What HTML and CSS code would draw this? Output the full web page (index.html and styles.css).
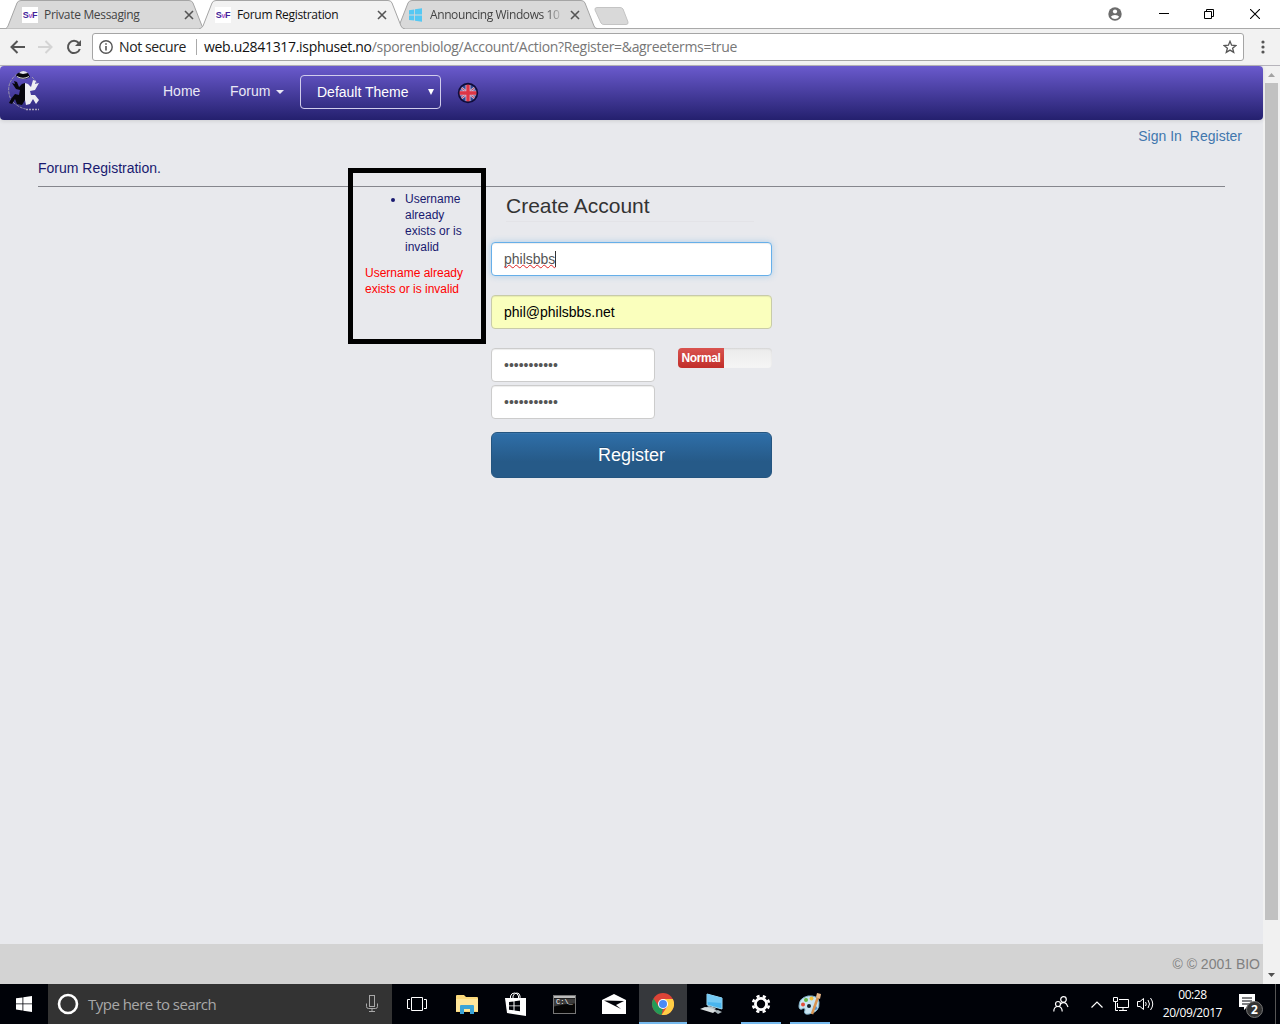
FILE: index.html
```html
<!DOCTYPE html>
<html lang="en">
<head>
<meta charset="utf-8">
<title>Forum Registration</title>
<link rel="stylesheet" href="styles.css">
</head>
<body>
<header class="tabstrip">
  <div class="tab">
    <svg class="tab-shape" width="200" height="29" viewBox="0 0 200 29"><path d="M0 28.5Q1 28 2 26L11 3Q12 .5 15 .5H183Q186 .5 187 3L196 26Q197 28.5 199 28.5" fill="#d9d9d9" stroke="#a5a5a5"/></svg>
    <span class="sf">S<i>v</i>F</span><span class="tab-title muted">Private Messaging</span>
    <svg class="close" width="10" height="10" viewBox="0 0 10 10"><path d="M1 1l8 8M9 1L1 9"/></svg>
  </div>
  <div class="tab behind">
    <svg class="tab-shape" width="205" height="29" viewBox="0 0 205 29"><path d="M5 28.5Q6 28 7 26L16 3Q17 .5 20 .5H189Q192 .5 193 3L202 26Q203 28.5 205 28.5" fill="#d9d9d9" stroke="#a5a5a5"/></svg>
    <svg class="favicon" width="15" height="14" viewBox="0 0 15 14"><path fill="#55c8f3" d="M1 2.2l5.2-.8v5.1H1zM7 1.3L14 .2v6.3H7zM1 7.4h5.2v5.2L1 11.9zM7 7.4h7v6.3l-7-1z"/></svg>
    <span class="tab-title muted fade">Announcing Windows 10</span>
    <svg class="close" width="10" height="10" viewBox="0 0 10 10"><path d="M1 1l8 8M9 1L1 9"/></svg>
  </div>
  <div class="tab active">
    <svg class="tab-shape" width="206" height="29" viewBox="0 0 206 29"><path d="M0 29Q3 28 4 26L13 3Q14 .5 17 .5H189Q192 .5 193 3L202 26Q203 28.5 206 29" fill="#f2f2f2" stroke="#a5a5a5"/></svg>
    <span class="sf">S<i>v</i>F</span><span class="tab-title">Forum Registration</span>
    <svg class="close" width="10" height="10" viewBox="0 0 10 10"><path d="M1 1l8 8M9 1L1 9"/></svg>
  </div>
  <svg class="newtab" width="36" height="18" viewBox="0 0 36 18"><path d="M3 .5H26Q28 .5 29 2L34 15Q34.500 17.500 32 17.500H10Q8 17.500 7 16L1 3Q.5 .5 3 .5z" fill="#d9d9d9" stroke="#c4c4c4"/></svg>
  <div class="window-buttons">
    <svg width="14" height="14" viewBox="0 0 14 14"><circle cx="7" cy="7" r="6.700" fill="#6c6c6c"/><circle cx="7" cy="4.500" r="2.100" fill="#fff"/><path d="M2.800 9.800Q4 8 7 8t4.200 1.800Q9.700 12 7 12T2.800 9.800" fill="#fff"/></svg>
    <svg width="10" height="10" viewBox="0 0 10 10"><path d="M0 4.500h10" stroke="#000"/></svg>
    <svg width="10" height="10" viewBox="0 0 10 10" fill="none" stroke="#000"><path d="M.5 2.500h7v7h-7zM2.500 2.500v-2h7v7h-2"/></svg>
    <svg width="10" height="10" viewBox="0 0 10 10"><path d="M0 0l10 10M10 0L0 10" stroke="#000" stroke-width="1.100"/></svg>
  </div>
</header>

<div class="toolbar">
  <svg class="back" width="16" height="14" viewBox="0 0 16 14"><path d="M15 7H2M7.500 1L1.500 7l6 6" fill="none" stroke="#555" stroke-width="2"/></svg>
  <svg class="forward" width="16" height="14" viewBox="0 0 16 14"><path d="M0 7h13M7.500 1l6 6-6 6" fill="none" stroke="#d4d4d4" stroke-width="2"/></svg>
  <svg class="reload" width="16" height="16" viewBox="0 0 16 16"><path d="M13.800 10A6.100 6.100 0 1 1 12.700 4" fill="none" stroke="#555" stroke-width="2"/><path d="M15 1v6H9z" fill="#555"/></svg>
  <div class="omnibox">
    <svg width="14" height="14" viewBox="0 0 14 14"><circle cx="7" cy="7" r="6.200" fill="none" stroke="#555" stroke-width="1.400"/><path d="M7 6v4.600M7 3.200v1.600" stroke="#555" stroke-width="1.600"/></svg>
    <span class="secure">Not secure</span>
    <span class="url"><b>web.u2841317.isphuset.no</b>/sporenbiolog/Account/Action?Register=&amp;agreeterms=true</span>
    <svg class="star" width="14" height="14" viewBox="0 0 14 14"><path d="M7 1.300l1.600 3.900 4.300.3-3.300 2.700 1.100 4.200L7 10.100l-3.700 2.300 1.100-4.200L1.100 5.500l4.300-.3z" fill="none" stroke="#555" stroke-width="1.300"/></svg>
  </div>
  <svg class="menu" width="4" height="14" viewBox="0 0 4 14" fill="#555"><circle cx="2" cy="2" r="1.600"/><circle cx="2" cy="7" r="1.600"/><circle cx="2" cy="12" r="1.600"/></svg>
</div>

<div class="viewport">
  <main class="page">
    <nav class="navbar">
      <svg class="logo" width="34" height="42" viewBox="0 0 34 42">
        <path d="M9 4Q0 11 .7 21t8 14q4 3 9 4M24 7q4 4 5 7" fill="none" stroke="#9c96ae" stroke-width="1" stroke-dasharray="3 1"/>
        <path d="M8 5Q13-1 20 3l2 4q-6 4-13 0z" fill="#08070d"/><path d="M11 3Q15-1 20 3l-5 1z" fill="#e8e8ef"/><path d="M9 6.500q6 3.500 12 0" fill="none" stroke="#ddd"/>
        <path d="M17 13l-3 1-3 3-2-5-3-1 1 3-3-1 4 6 4 1-1 5-4-1-4 5-2 4 3 1 3-5 2 5 5 1 3-5z" fill="#07060c"/>
        <path d="M17 13l3 1 3 3 2-7 3 1-1 3 4-1-4 7-5 1 1 4 4 0 4 5-3 4-3-5-3 5-4 1-1-5z" fill="#eeeef2"/>
        <path d="M18 39.500h13" stroke="#aaa5bc" stroke-width="1.500" stroke-dasharray="2 1"/>
      </svg>
      <a class="home">Home</a>
      <a class="forum">Forum<i class="caret"></i></a>
      <div class="theme"><span>Default Theme</span><i class="arrow"></i></div>
      <svg class="flag" width="22" height="22" viewBox="0 0 22 22"><clipPath id="c"><circle cx="11" cy="11" r="9"/></clipPath><g clip-path="url(#c)"><path d="M0 0h22v22H0z" fill="#2d4794"/><path d="M2 4l18 14M20 4L2 18" stroke="#b9aed2" stroke-width="2.600"/><path d="M2 4l18 14M20 4L2 18" stroke="#c74356" stroke-width=".9"/><path d="M11 0v22M0 11h22" stroke="#d5b4cc" stroke-width="5"/><path d="M11 0v22M0 11h22" stroke="#dd3546" stroke-width="3.300"/></g><circle cx="11" cy="11" r="9.400" fill="none" stroke="#100c38" stroke-width="1.600"/></svg>
    </nav>
    <div class="account-links"><a>Sign In</a><a>Register</a></div>
    <h1>Forum Registration.</h1>
    <section class="registration">
      <div class="errors">
        <ul><li>Username already exists or is invalid</li></ul>
        <p>Username already exists or is invalid</p>
      </div>
      <form class="account">
        <h2>Create Account</h2>
        <div class="field focused"><span class="misspelt">philsbbs</span><i class="cursor"></i></div>
        <div class="field autofill">phil@philsbbs.net</div>
        <div class="passwords">
          <div class="password-fields">
            <div class="field"><span class="dots">•••••••••••</span></div>
            <div class="field"><span class="dots">•••••••••••</span></div>
          </div>
          <div class="strength"><span>Normal</span></div>
        </div>
        <button type="button" class="submit">Register</button>
      </form>
    </section>
    <div class="highlight"></div>
    <footer>© © 2001 BIO</footer>
  </main>
  <aside class="scrollbar">
    <svg width="7" height="4" viewBox="0 0 7 4"><path d="M0 4l3.500-4L7 4z" fill="#a3a3a3"/></svg>
    <div class="thumb"></div>
    <svg width="7" height="4" viewBox="0 0 7 4"><path d="M0 0h7L3.500 4z" fill="#505050"/></svg>
  </aside>
</div>

<div class="taskbar">
  <div class="task start"><svg width="16" height="16" viewBox="0 0 16 16"><path fill="#fff" d="M0 2.300l6.500-.9v6.100H0zM7.300 1.300L16 0v7.500H7.300zM0 8.300h6.500v6.200L0 13.600zM7.300 8.300H16V16l-8.700-1.300z"/></svg></div>
  <div class="search">
    <svg width="22" height="22" viewBox="0 0 22 22"><circle cx="11" cy="11" r="9" fill="none" stroke="#fff" stroke-width="2.600"/></svg>
    <span>Type here to search</span>
    <svg width="12" height="18" viewBox="0 0 12 18" fill="none" stroke="#a8a8a8"><rect x="3.500" y=".5" width="5" height="11"/><path d="M.5 8.500v3q0 2 2 2h7q2 0 2-2v-3M6 13.500v3M3 16.500h6"/></svg>
  </div>
  <div class="task"><svg width="20" height="16" viewBox="0 0 20 16" fill="none" stroke="#fff"><path d="M4.500 1.500h11v13h-11zM3 3.500H.5v9H3M17 3.500h2.500v9H17"/></svg></div>
  <div class="task nudge"><svg width="22" height="20" viewBox="0 0 22 20"><path d="M0 2q0-1 1-1h7l2 2h11q1 0 1 1v14H0z" fill="#fbd97b"/><path d="M0 5h22v12H0z" fill="#ffe69a"/><path d="M4 12q0-1 1-1h12q1 0 1 1v8h-4v-5H8v5H4z" fill="#3ba4d6"/></svg></div>
  <div class="task nudge"><svg width="22" height="24" viewBox="0 0 22 24"><path d="M5.500 7V4q1-3 4-3t4 3v3M8 6V4q1-3 4-3 2.500 0 3 3v2" fill="none" stroke="#fff"/><path d="M0 6l21 0v18L2 21z" fill="#fff"/><path d="M4 10l4.500-.6v4H4zM9.500 9.200L15 8.500v4.900H9.500zM4 14.300h4.500v4L4 17.700zM9.500 14.300H15v4.900l-5.500-.8z" fill="#000208"/></svg></div>
  <div class="task nudge"><svg width="23" height="19" viewBox="0 0 23 19"><rect x=".5" y=".5" width="22" height="18" fill="#050505" stroke="#777"/><path d="M1 2h21" stroke="#bbb" stroke-width="2"/><path d="M1 3.500h21v5q-10 0-21 3z" fill="#3b3b3b"/><text class="prompt" x="3" y="9">C:\_</text></svg></div>
  <div class="task nudge"><svg width="24" height="20" viewBox="0 0 24 20"><path d="M0 6l12-6 12 6v14H0z" fill="#fff"/><path d="M2 6.500L22 7l-8 4 5 4z" fill="#000208"/></svg></div>
  <div class="task chrome"><svg width="22" height="22" viewBox="0 0 22 22"><circle cx="11" cy="11" r="11" fill="#dc4437"/><path d="M1.500 5.500L6.700 13.500 11 16 9.500 21.900A11 11 0 0 1 1.500 5.500" fill="#239b57"/><path d="M11 6h9.800a11 11 0 0 1-11.300 15.900L15.300 13.500z" fill="#fecd45"/><circle cx="11" cy="11" r="5" fill="#fff"/><circle cx="11" cy="11" r="4" fill="#4a8af4"/></svg></div>
  <div class="task"><svg width="24" height="22" viewBox="0 0 24 22"><path d="M7 1l15 4v11L7 12z" fill="#49b5ee" stroke="#9ed8ef"/><path d="M7 1l15 4v5L7 9z" fill="#75caf4"/><path d="M9 13l7 2-2 2-9-2z" fill="#b6c4ca"/><path d="M0 16l5-2 12 3-4 3z" fill="#d8dedf"/><path d="M14 18l4-1 4 2-4 2z" fill="#aab7bc"/></svg></div>
  <div class="task open"><svg width="20" height="20" viewBox="0 0 20 20"><circle cx="10" cy="10" r="5.600" fill="none" stroke="#fff" stroke-width="2.800"/><circle cx="10" cy="10" r="8" fill="none" stroke="#fff" stroke-width="2.600" stroke-dasharray="3.140 3.140" transform="rotate(11 10 10)"/></svg></div>
  <div class="task open"><svg width="24" height="24" viewBox="0 0 24 24"><path d="M1 14Q1 6 10 4q10-1 11 6 1 10-10 12-6 1-4-4Q7 15 4 17q-3 1-3-3" fill="#c8e4f1" stroke="#83b5cb"/><circle cx="5" cy="12.500" r="2" fill="#e14d39"/><circle cx="8" cy="8" r="2" fill="#65b844"/><circle cx="13.500" cy="6.500" r="2" fill="#f1c43e"/><circle cx="11" cy="14" r="2" fill="#14222b"/><circle cx="17" cy="16" r="2" fill="#458bd0"/><path d="M14 22L20 5" stroke="#d89451" stroke-width="2.500"/><path d="M18 5l1-4 4 1-1 5z" fill="#e7b889"/></svg></div>
  <div class="tray">
    <svg class="people" width="16" height="16" viewBox="0 0 16 16" fill="none" stroke="#fff" stroke-width="1.200"><circle cx="10.500" cy="3.500" r="2.800"/><path d="M7.500 8q3-3 6 0l1.500 3"/><circle cx="5" cy="8" r="2.500"/><path d="M.8 15.500q0-5 4.200-5t4.200 5"/></svg>
    <svg class="chevron" width="12" height="7" viewBox="0 0 12 7"><path d="M.5 6.500L6 1l5.500 5.500" fill="none" stroke="#fff" stroke-width="1.200"/></svg>
    <svg class="network" width="17" height="15" viewBox="0 0 17 15" fill="none" stroke="#fff"><path d="M6 2.500h9.500v8H4.500V6M10 11v3M6 13.500h8M.5.500h4v4h-4zM2.500 5v8.500H5"/></svg>
    <svg class="sound" width="17" height="14" viewBox="0 0 17 14" fill="none" stroke="#fff"><path d="M.5 4.500H3l3.500-3v11l-3.500-3H.5zM8.500 5q1.500 2 0 4M11 3q3 4 0 8M13.500 1q4.500 6 0 12"/></svg>
    <div class="clock"><span>00:28</span><span>20/09/2017</span></div>
    <div class="notices"><svg width="17" height="17" viewBox="0 0 17 17"><path d="M0 0h16v13H8l-3 3v-3H0z" fill="#fff"/><path d="M3 4h10M3 7h10M3 10h7" stroke="#000208"/></svg><b>2</b></div>
  </div>
</div>
</body>
</html>
```
FILE: styles.css
```css
* { box-sizing: border-box; }
body { margin: 0; width: 1280px; height: 1024px; overflow: hidden; display: flex; flex-direction: column; font: 14px/20px "Liberation Sans", Arial, sans-serif; background: #fff; }
svg { display: block; flex: none; }
i { font-style: normal; }

.tabstrip { height: 29px; flex: none; display: flex; align-items: flex-start; padding-left: 6px; border-bottom: 1px solid #a9a9a9; font: 12px/16px "Open Sans", "Noto Sans", sans-serif; }
.tab { position: relative; width: 200px; height: 29px; flex: none; display: flex; align-items: center; padding: 1px 12px 0 16px; }
.tab.behind { order: 2; margin-left: 186px; padding-left: 16px; }
.tab.active { order: 3; z-index: 2; width: 206px; margin-left: -398px; padding: 1px 18px 0 16px; }
.newtab { order: 4; margin: 7px 0 0 189px; }
.tab-shape { position: absolute; left: 0; top: 0; }
.tab > :not(.tab-shape) { position: relative; }
.tab-title { flex: 1; margin-left: 6px; white-space: nowrap; color: #111; letter-spacing: -.32px; }
.tab-title.muted { color: #444; }
.tab.behind { width: 205px; }
.tab-title.fade { flex: none; width: 134px; margin-left: 7px; letter-spacing: -.4px; -webkit-mask-image: linear-gradient(90deg, #000 86%, transparent); mask-image: linear-gradient(90deg, #000 86%, transparent); }
.close { stroke: #555; stroke-width: 1.6; margin-right: 0; }
.behind .close { margin-left: auto; margin-right: 5px; }
.sf { width: 16px; height: 16px; background: #fff; color: #432399; font: bold 9px/16px "Liberation Sans", Arial, sans-serif; letter-spacing: -.3px; text-align: center; }
.sf i { color: #a64dcb; font-size: 7px; }
.window-buttons { order: 5; margin-left: auto; display: flex; align-items: center; height: 27px; padding-right: 20px; gap: 36px; }
.window-buttons svg:first-child { margin-right: 1px; }
.window-buttons svg:nth-child(2) { margin-right: -1px; }

.toolbar { height: 37px; flex: none; display: flex; align-items: center; padding: 0 15px 1px 10px; background: #f2f2f2; border-bottom: 1px solid #b6b4bb; }
.forward { margin-left: 12px; }
.reload { margin: 0 10px 0 12px; }
.omnibox { width: 1152px; height: 28px; display: flex; align-items: center; padding: 0 6px; background: #fff; border: 1px solid #a5a5a5; border-radius: 3px; font: 14px/18px "Open Sans", "Noto Sans", sans-serif; }
.secure { margin-left: 6px; width: 78px; border-right: 1px solid #aaa; line-height: 16px; letter-spacing: -.4px; white-space: nowrap; color: #222; }
.url { margin-left: 7px; flex: 1; color: #777; letter-spacing: -.32px; white-space: nowrap; }
.url b { font-weight: 400; color: #111; }
.menu { margin-left: auto; }

.viewport { height: 918px; flex: none; display: flex; }
.page { position: relative; width: 1263px; display: flex; flex-direction: column; background: #e8e9ed; color: #191970; }
.navbar { height: 54px; flex: none; display: flex; padding-left: 8px; border-radius: 4px; border: 0; background: linear-gradient(#6a5acd, #24206e); box-shadow: 0 1px 4px rgba(0,0,0,.12); color: #e9e8f5; }
.logo { margin-top: 4px; }
.home { margin: 15px 0 0 121px; width: 67px; }
.forum { margin-top: 15px; width: 70px; }
.caret { display: inline-block; margin-left: 6px; vertical-align: 2px; border: 4px solid transparent; border-top-color: #e9e8f5; border-bottom: 0; }
.theme { width: 141px; height: 34px; margin-top: 9px; padding: 0 6px 0 16px; display: flex; align-items: center; justify-content: space-between; border: 1px solid #d1cdec; border-radius: 4px; color: #fff; }
.arrow { border: 3px solid transparent; border-top: 6px solid #fff; border-bottom: 0; }
.flag { margin: 16px 0 0 16px; }

.account-links { display: flex; justify-content: flex-end; gap: 8px; padding: 6px 21px 0 0; color: #4177ad; }
h1 { margin: 12px 38px 0; height: 29px; border-bottom: 1px solid #85868d; font-size: 14px; line-height: 20px; font-weight: 400; }
.registration { display: grid; grid-template-columns: 98px 281px; column-gap: 28px; padding: 4px 0 0 365px; }
.errors { font-size: 12px; line-height: 16px; }
.errors ul { margin: 0 0 10px; padding-left: 40px; }
.errors p { margin: 0 -6px 0 0; color: #f00; }
h2 { margin: 0 18px 20px 15px; height: 31px; border-bottom: 1px solid #e3e3e7; color: #333; font-size: 21px; line-height: 30px; font-weight: 400; white-space: nowrap; }
.field { height: 34px; display: flex; align-items: center; padding: 0 12px; background: #fff; border: 1px solid #ccc; border-radius: 4px; box-shadow: inset 0 1px 1px rgba(0,0,0,.075); color: #555; }
.field.focused { border-color: #66afe9; box-shadow: inset 0 1px 1px rgba(0,0,0,.075), 0 0 6px rgba(102,175,233,.45); }
.misspelt { text-decoration: underline wavy #e02525 1px; text-underline-offset: 0; text-decoration-skip-ink: none; }
.cursor { width: 1px; height: 16px; background: #333; }
.field.autofill { margin: 19px 0; background: #faffbd; color: #000; border-color: #c8cba9; }
.passwords { display: flex; justify-content: space-between; }
.password-fields { width: 164px; display: grid; gap: 3px; }
.strength { width: 94px; height: 20px; overflow: hidden; border-radius: 4px; background: linear-gradient(#ebebeb, #f5f5f5); box-shadow: inset 0 1px 2px rgba(0,0,0,.1); }
.strength span { display: block; width: 46px; height: 20px; background: linear-gradient(#d9534f, #c12e2a); color: #fff; font: bold 12px/20px "Liberation Sans", Arial, sans-serif; letter-spacing: -.4px; text-align: center; }
.submit { width: 281px; height: 46px; margin-top: 13px; padding: 0; border: 1px solid #245580; border-radius: 6px; background: linear-gradient(#2f6fa9, #265a88 65%); box-shadow: inset 0 1px 0 rgba(255,255,255,.05); color: #fff; font: 18px/24px "Liberation Sans", Arial, sans-serif; text-shadow: 0 -1px 0 rgba(0,0,0,.2); }
.highlight { position: absolute; left: 348px; top: 102px; width: 138px; height: 176px; border: 5px solid #000; }
footer { height: 40px; margin-top: auto; padding-right: 3px; background: #d3d3d3; color: #808080; text-align: right; line-height: 40px; }
.scrollbar { width: 17px; display: flex; flex-direction: column; align-items: center; padding: 7px 0 7px; background: #f1f1f1; }
.thumb { width: 13px; height: 837px; margin: 6px 0 auto; background: #c1c1c1; }

.taskbar { height: 40px; flex: none; display: flex; background: #000208; color: #fff; font-family: "Open Sans", "Noto Sans", sans-serif; }
.task { width: 49px; flex: none; display: flex; align-items: center; justify-content: center; }
.task.nudge { padding-left: 2px; }
.start { width: 48px; }
.search { width: 344px; display: flex; align-items: center; padding: 0 14px 0 9px; background: #333; color: #a8a8a8; font-size: 15px; }
.search span { flex: 1; margin-left: 9px; letter-spacing: -.52px; }
.prompt { font: 7px "Liberation Mono", monospace; fill: #fff; }
.chrome { width: 48px; margin-left: 2px; background: linear-gradient(#76b9ed, #76b9ed) bottom / 48px 2px no-repeat #36383c; }
.open { background: linear-gradient(#76b9ed, #76b9ed) bottom / 40px 2px no-repeat; }
.tray { flex: 1; display: flex; align-items: center; justify-content: flex-end; border-right: 1px solid #555; margin-right: 4px; padding-right: 12px; }
.chevron { margin-left: 22px; }
.network { margin-left: 10px; }
.sound { margin-left: 7px; }
.clock { margin-left: 9px; display: flex; flex-direction: column; align-items: center; font-size: 12px; line-height: 18px; letter-spacing: -.45px; }
.notices { position: relative; width: 24px; height: 20px; margin-left: 17px; }
.notices b { position: absolute; left: 7px; top: 7px; width: 17px; height: 17px; border: 1px solid #777; border-radius: 50%; background: #333; font-size: 12px; line-height: 15px; text-align: center; }
```
